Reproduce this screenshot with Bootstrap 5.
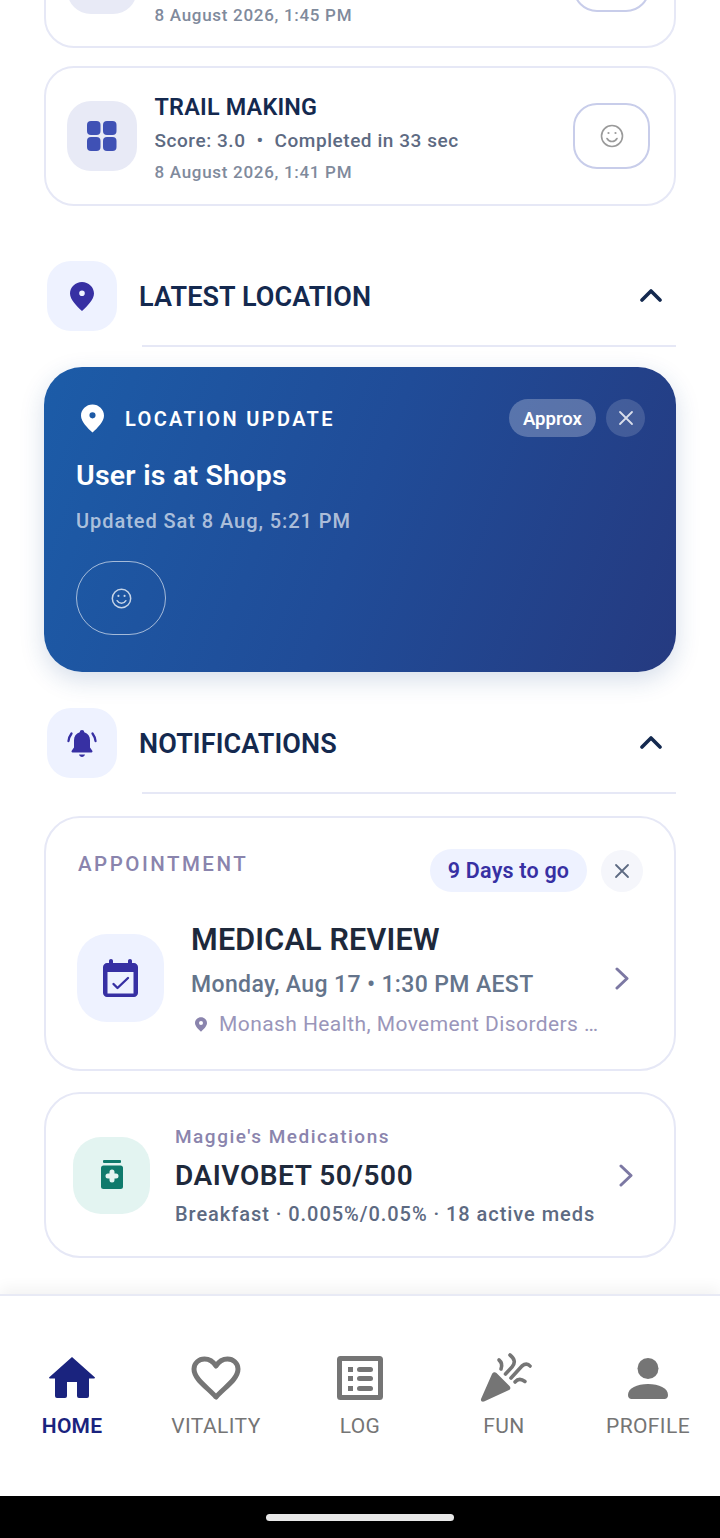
<!DOCTYPE html>
<html lang="en">
<head>
<meta charset="utf-8">
<title>Home</title>
<link rel="stylesheet" href="https://cdn.jsdelivr.net/npm/bootstrap@5.3.0/dist/css/bootstrap.min.css">
<style>
html,body{margin:0;background:#fff;height:1538px;overflow:hidden}
body{font-family:Roboto,"Liberation Sans",sans-serif}
svg{display:block;flex:none}
.feed{height:1294px;overflow:hidden;padding:0 44px}
.game-card{height:140px;border:2px solid #e6e8f6;border-radius:30px;margin-top:18px;padding:0 24px 0 21px;background:#fff}
.game-card.cut{margin-top:-92px}
.game-tile{width:70px;height:70px;border-radius:24px;background:#e8eaf6;margin-right:17.5px}
.game-body{height:136px;padding-bottom:20px}
.game-title{font-size:23.4px;line-height:26px;font-weight:600;color:#14294f;letter-spacing:.2px}
.game-score{font-size:19px;line-height:26px;font-weight:500;color:#5d6a82;margin-top:8px;letter-spacing:.55px}
.game-score i{font-style:normal;width:29px;text-align:center}
.game-date{font-size:17px;line-height:24px;color:#7f8a9c;margin-top:6px;letter-spacing:.7px;font-weight:500}
.smile-btn{width:77px;height:66px;border:2px solid #c8cdea;border-radius:24px;background:#fff}
.cut .game-body{padding-bottom:19px}
.cut .smile-btn,.cut .game-tile{margin-top:2px}
.sec-head{height:70px;margin-top:55px;padding-left:3px}
.sec-head.next{margin-top:36px}
.sec-tile{width:70px;height:70px;border-radius:24px;background:#eef2ff;margin-right:22px}
.sec-title{font-size:27px;font-weight:600;color:#14294f;letter-spacing:.1px;padding-top:3px}
.sec-chev{margin:-2px 14px 0 0}
.sec-rule{height:2px;background:#e6e8f6;margin:14px 0 0 98px}
.bell-ico{margin-top:2px}
.loc-card{height:305px;margin-top:20px;border-radius:38px;background:linear-gradient(110deg,#1c5ca8 0%,#204c98 50%,#253a80 100%);box-shadow:0 8px 24px rgba(30,70,140,.18);padding:32px 31px 0 32px;color:#fff}
.loc-label{font-size:20px;font-weight:600;letter-spacing:2.35px;margin-left:21px;padding-top:2px}
.loc-pin{margin-left:5px}
.loc-pill{height:38px;width:87px;border-radius:19px;background:rgba(255,255,255,.25);font-size:18.5px;font-weight:600;margin-right:10px;padding-top:3px}
.loc-close{width:39px;height:38px;border-radius:50%;background:rgba(255,255,255,.15)}
.loc-head{height:38px}
.loc-title{font-size:28.5px;line-height:34px;font-weight:600;margin-top:22px;letter-spacing:.22px}
.loc-time{font-size:20px;line-height:26px;font-weight:500;color:rgba(255,255,255,.65);margin-top:15px;letter-spacing:.94px}
.loc-smile{width:90px;height:74px;border:1.5px solid rgba(255,255,255,.6);border-radius:37px;margin-top:27px}
.appt-card{height:255px;margin-top:22px;border:2px solid #e6e8f6;border-radius:36px;padding:31px 31px 0 32px;background:#fff}
.med-card{height:166px;margin-top:21px;border:2px solid #e6e8f6;border-radius:36px;padding:0 41px 0 27px;background:#fff}
.appt-head{height:43px}
.appt-label{font-size:20.5px;font-weight:500;letter-spacing:2.5px;color:#8a84ad;margin-bottom:13px}
.appt-pill{width:157px;height:43px;border-radius:22px;background:#eef2ff;color:#3730a3;font-size:21.5px;font-weight:600;margin-right:14px;letter-spacing:.2px;padding-top:2px}
.appt-close{width:42px;height:42px;border-radius:50%;background:#f5f6fb}
.appt-row{margin-top:30px}
.appt-tile{width:87px;height:88px;border-radius:30px;background:#eef2ff;margin:12px 27px 0 -1px}
.appt-title{font-size:30.5px;line-height:36px;font-weight:600;color:#1e293b;letter-spacing:.2px}
.appt-date{font-size:23px;line-height:30px;font-weight:500;color:#64748b;margin-top:12px;letter-spacing:.37px}
.appt-place{font-size:21px;line-height:28px;color:#9a96ba;margin-top:10px;letter-spacing:.42px}
.appt-place span{white-space:nowrap;margin-left:12px}
.appt-pin{margin-left:4px}
.appt-chev{margin:45px 14px 0 0}
.med-tile{width:77px;height:77px;border-radius:28px;background:#e3f4f1;margin-right:25px}
.med-text{margin-top:3px}
.med-label{font-size:19px;line-height:24px;font-weight:500;letter-spacing:1.5px;color:#8a84ad}
.med-title{font-size:28px;line-height:34px;font-weight:600;color:#1e293b;margin-top:10px;letter-spacing:.55px}
.med-sub{font-size:20px;line-height:28px;font-weight:500;color:#5d6a82;margin-top:7px;letter-spacing:.95px}
.tabbar{height:202px;background:#fff;border-top:2px solid #e8eaf5;box-shadow:0 -6px 14px rgba(0,0,0,.05);position:relative}
.tab-item{width:144px;padding-top:59px;color:#757575;font-size:21px;line-height:24px;letter-spacing:.4px}
.tab-item.on{color:#1a237e;font-weight:600;letter-spacing:.2px}
.tab-ico{height:46px;margin-bottom:13px}
.fun-ico{margin-left:4px}
.sysbar{height:42px;background:#000}
.sys-pill{width:188px;height:7px;border-radius:4px;background:#e8e8e8}
</style>
</head>
<body>
<main class="feed">
  <section class="game-card cut d-flex align-items-center">
    <div class="game-tile"></div>
    <div class="game-body flex-grow-1 d-flex flex-column justify-content-end"><div class="game-date">8 August 2026, 1:45 PM</div></div>
    <div class="smile-btn"></div>
  </section>

  <section class="game-card d-flex align-items-center">
    <div class="game-tile d-flex align-items-center justify-content-center">
      <svg width="30" height="30" viewBox="0 0 30 30" fill="#3f51b5"><rect width="13.5" height="14" rx="4"/><rect x="16" width="13.5" height="14" rx="4"/><rect y="16" width="13.5" height="14" rx="4"/><rect x="16" y="16" width="13.5" height="14" rx="4"/></svg>
    </div>
    <div class="game-body flex-grow-1 d-flex flex-column justify-content-end">
      <div class="game-title">TRAIL MAKING</div>
      <div class="game-score d-flex"><span>Score: 3.0</span><i>•</i><span>Completed in 33 sec</span></div>
      <div class="game-date">8 August 2026, 1:41 PM</div>
    </div>
    <div class="smile-btn d-flex align-items-center justify-content-center">
      <svg width="24" height="24" viewBox="0 0 24 24" fill="none" stroke="#9a9a9a" stroke-width="1.6"><circle cx="12" cy="12" r="10.5"/><path d="M7 14.5c1.2 2 3 3 5 3s3.800-1 5-3" stroke-linecap="round"/><circle cx="8.500" cy="9" r="1.100" fill="#9a9a9a" stroke="none"/><circle cx="15.500" cy="9" r="1.100" fill="#9a9a9a" stroke="none"/></svg>
    </div>
  </section>

  <header class="sec-head d-flex align-items-center">
    <div class="sec-tile d-flex align-items-center justify-content-center">
      <svg width="24" height="29" viewBox="0 0 24 29"><path fill="#3730a3" fill-rule="evenodd" d="M12 0C5.400 0 0 5.200 0 11.500c0 6 7 13 12 17.500 5-4.500 12-11.500 12-17.500C24 5.200 18.600 0 12 0zm0 8.500a2.800 2.800 0 1 1 0 5.600 2.800 2.800 0 0 1 0-5.600z"/></svg>
    </div>
    <div class="sec-title flex-grow-1">LATEST LOCATION</div>
    <svg class="sec-chev" width="22" height="14" viewBox="0 0 22 14" fill="none" stroke="#14294f" stroke-width="3.600" stroke-linecap="round" stroke-linejoin="round"><path d="M2 12 11 3l9 9"/></svg>
  </header>
  <div class="sec-rule"></div>

  <section class="loc-card">
    <div class="loc-head d-flex align-items-center">
      <svg class="loc-pin" width="23" height="29" viewBox="0 0 24 29"><path fill="#fff" fill-rule="evenodd" d="M12 0C5.400 0 0 5.200 0 11.500c0 6 7 13 12 17.500 5-4.500 12-11.500 12-17.500C24 5.200 18.600 0 12 0zm0 8a3.200 3.200 0 1 1 0 6.400 3.200 3.200 0 0 1 0-6.400z"/></svg>
      <div class="loc-label flex-grow-1">LOCATION UPDATE</div>
      <div class="loc-pill d-flex align-items-center justify-content-center">Approx</div>
      <div class="loc-close d-flex align-items-center justify-content-center">
        <svg width="16" height="16" viewBox="0 0 16 16" stroke="rgba(255,255,255,.8)" stroke-width="1.800" stroke-linecap="round"><path d="M2 2l12 12M14 2 2 14"/></svg>
      </div>
    </div>
    <div class="loc-title">User is at Shops</div>
    <div class="loc-time">Updated Sat 8 Aug, 5:21 PM</div>
    <div class="loc-smile d-flex align-items-center justify-content-center">
      <svg width="21" height="21" viewBox="0 0 24 24" fill="none" stroke="rgba(255,255,255,.75)" stroke-width="1.700"><circle cx="12" cy="12" r="10.500"/><path d="M7 14.500c1.200 2 3 3 5 3s3.800-1 5-3" stroke-linecap="round"/><circle cx="8.500" cy="9" r="1.200" fill="rgba(255,255,255,.75)" stroke="none"/><circle cx="15.500" cy="9" r="1.200" fill="rgba(255,255,255,.75)" stroke="none"/></svg>
    </div>
  </section>

  <header class="sec-head next d-flex align-items-center">
    <div class="sec-tile d-flex align-items-center justify-content-center">
      <svg class="bell-ico" width="30" height="30" viewBox="0 0 30 30"><path fill="#3730a3" d="M15 1a2.400 2.400 0 0 1 2.300 2.300c3.800 1.200 5.700 4.200 5.700 8v7.200l2.300 3.300c.5.700.1 1.700-.8 1.700h-19c-.9 0-1.300-1-.8-1.700L7 18.500v-7.200c0-3.800 1.900-6.800 5.700-8A2.400 2.400 0 0 1 15 1z"/><path fill="#3730a3" d="M12 25.500h6c-.4 1.500-1.600 2.500-3 2.500s-2.600-1-3-2.500z"/><path fill="none" stroke="#3730a3" stroke-width="2.300" stroke-linecap="round" d="M1.500 12c.2-2.800 1.200-5 3-7.500M28.500 12c-.2-2.800-1.200-5-3-7.500"/></svg>
    </div>
    <div class="sec-title flex-grow-1">NOTIFICATIONS</div>
    <svg class="sec-chev" width="22" height="14" viewBox="0 0 22 14" fill="none" stroke="#14294f" stroke-width="3.600" stroke-linecap="round" stroke-linejoin="round"><path d="M2 12 11 3l9 9"/></svg>
  </header>
  <div class="sec-rule"></div>

  <section class="appt-card">
    <div class="appt-head d-flex align-items-center">
      <div class="appt-label flex-grow-1">APPOINTMENT</div>
      <div class="appt-pill d-flex align-items-center justify-content-center">9 Days to go</div>
      <div class="appt-close d-flex align-items-center justify-content-center">
        <svg width="16" height="16" viewBox="0 0 16 16" stroke="#5d6a82" stroke-width="1.800" stroke-linecap="round"><path d="M2 2l12 12M14 2 2 14"/></svg>
      </div>
    </div>
    <div class="appt-row d-flex align-items-start">
      <div class="appt-tile d-flex align-items-center justify-content-center flex-none">
        <svg width="35" height="38" viewBox="0 0 35 38"><path fill="#3730a3" d="M8 0c1.200 0 2 .9 2 2v2h15V2c0-1.100.8-2 2-2s2 .9 2 2v2h2c2 0 4 1.800 4 4v26c0 2.200-2 4-4 4H4c-2 0-4-1.800-4-4V8c0-2.200 2-4 4-4h2V2c0-1.100.8-2 2-2z"/><rect x="4.500" y="13" width="26" height="21.500" fill="#eef2ff"/><path fill="none" stroke="#3730a3" stroke-width="2.400" stroke-linecap="round" stroke-linejoin="round" d="M10.500 25l4 4 10.500-10"/></svg>
      </div>
      <div class="flex-grow-1">
        <div class="appt-title">MEDICAL REVIEW</div>
        <div class="appt-date">Monday, Aug 17 • 1:30 PM AEST</div>
        <div class="appt-place d-flex align-items-center">
          <svg class="appt-pin" width="12" height="17" viewBox="0 0 24 29"><path fill="#8a84ad" fill-rule="evenodd" d="M12 0C5.400 0 0 5.200 0 11.500c0 6 7 13 12 17.500 5-4.500 12-11.500 12-17.500C24 5.200 18.600 0 12 0zm0 7.500a4 4 0 1 1 0 8 4 4 0 0 1 0-8z"/></svg>
          <span>Monash Health, Movement Disorders …</span>
        </div>
      </div>
      <svg class="appt-chev" width="14" height="23" viewBox="0 0 14 23" fill="none" stroke="#7c78a3" stroke-width="3" stroke-linecap="round" stroke-linejoin="round"><path d="M2 2l10 9.500L2 21"/></svg>
    </div>
  </section>

  <section class="med-card d-flex align-items-center">
    <div class="med-tile d-flex align-items-center justify-content-center flex-none">
      <svg width="22" height="30" viewBox="0 0 22 30"><rect x="2" width="18" height="3" rx="1" fill="#0f7a6c"/><rect y="5.500" width="22" height="23.500" rx="2.500" fill="#0f7a6c"/><path fill="#e3f4f1" d="M8.500 12a2.500 2.500 0 0 1 5 0v1.500H15a2.500 2.500 0 0 1 0 5h-1.500V20a2.500 2.500 0 0 1-5 0v-1.500H7a2.500 2.500 0 0 1 0-5h1.500z"/></svg>
    </div>
    <div class="flex-grow-1 med-text">
      <div class="med-label">Maggie's Medications</div>
      <div class="med-title">DAIVOBET 50/500</div>
      <div class="med-sub">Breakfast · 0.005%/0.05% · 18 active meds</div>
    </div>
    <svg width="14" height="23" viewBox="0 0 14 23" fill="none" stroke="#7c78a3" stroke-width="3" stroke-linecap="round" stroke-linejoin="round"><path d="M2 2l10 9.500L2 21"/></svg>
  </section>
</main>

<nav class="tabbar d-flex">
  <div class="tab-item on d-flex flex-column align-items-center">
    <div class="tab-ico d-flex align-items-center"><svg width="46" height="42" viewBox="0 0 46 42" fill="#1a237e"><path d="M23 0 46 20.500q0 1-1 1h-5V39a2 2 0 0 1-2 2h-8a2 2 0 0 1-2-2V25H18v14a2 2 0 0 1-2 2H8a2 2 0 0 1-2-2V21.500H1q-1 0-1-1z"/></svg></div>
    <span>HOME</span>
  </div>
  <div class="tab-item d-flex flex-column align-items-center">
    <div class="tab-ico d-flex align-items-center"><svg width="50" height="44" viewBox="0 0 50 44" fill="none" stroke="#757575" stroke-width="5" stroke-linejoin="round"><path d="M25 41C16 31 3 23 3 13 3 7 8 3 13.500 3 18 3 22.500 6 25 10 27.500 6 32 3 36.500 3 42 3 47 7 47 13 47 23 34 31 25 41z"/></svg></div>
    <span>VITALITY</span>
  </div>
  <div class="tab-item d-flex flex-column align-items-center">
    <div class="tab-ico d-flex align-items-center"><svg width="46" height="44" viewBox="0 0 46 44"><rect x="2.500" y="2.500" width="41" height="39" rx="1" fill="none" stroke="#757575" stroke-width="5"/><g fill="#757575"><rect x="11" y="11" width="5" height="5"/><rect x="11" y="20" width="5" height="5"/><rect x="11" y="30" width="5" height="5"/><rect x="20" y="11" width="16" height="5" rx="2.500"/><rect x="20" y="20" width="16" height="5" rx="2.500"/><rect x="20" y="30" width="16" height="5" rx="2.500"/></g></svg></div>
    <span>LOG</span>
  </div>
  <div class="tab-item d-flex flex-column align-items-center">
    <div class="tab-ico d-flex align-items-center"><svg class="fun-ico" width="52" height="50" viewBox="0 0 52 50"><path fill="#757575" d="M1 46 12 21c1-2 3-2.500 4.500-1l13 13c1.500 1.500 1 3.500-1 4.200L4 48.500C2 49 0.500 48 1 46z"/><g fill="none" stroke="#757575" stroke-width="3.600" stroke-linecap="round" stroke-linejoin="round"><path d="M19 7c3 2.500 3.500 5 2 9"/><path d="M30 2c5 4 5.500 8 2 12l-6.500 7"/><path d="M50 13c-2-2.500-5-2.500-8 0L31 25"/><path d="M35 29c3-3.500 6-3.500 10-.500"/></g></svg></div>
    <span>FUN</span>
  </div>
  <div class="tab-item d-flex flex-column align-items-center">
    <div class="tab-ico d-flex align-items-center"><svg width="40" height="41" viewBox="0 0 40 41" fill="#757575"><circle cx="20" cy="10.500" r="10.500"/><path d="M0 37c0-7 9-11 20-11s20 4 20 11c0 2.500-1.500 4-3.500 4h-33C1.500 41 0 39.500 0 37z"/></svg></div>
    <span>PROFILE</span>
  </div>
</nav>
<div class="sysbar d-flex align-items-center justify-content-center"><div class="sys-pill"></div></div>
</body>
</html>
